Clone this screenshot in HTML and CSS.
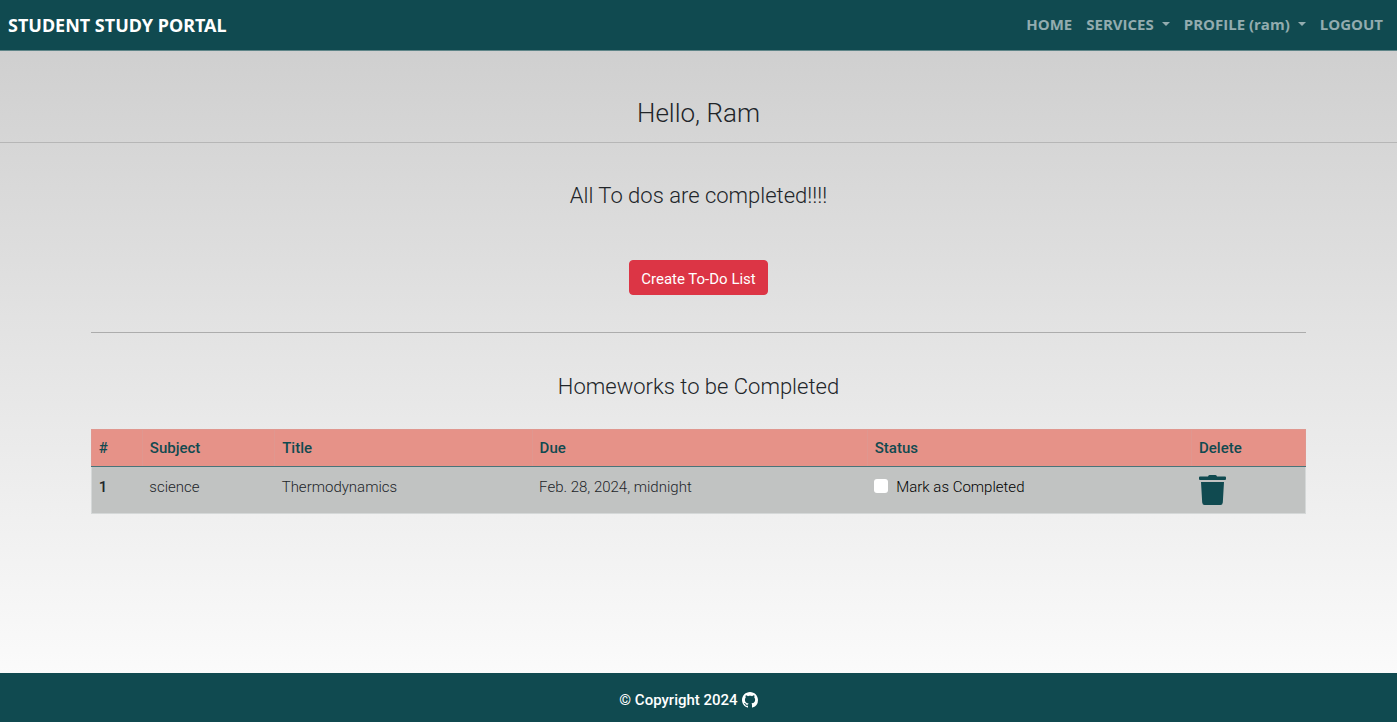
FILE: index.html
```html
<!DOCTYPE html>
<html lang="en">
<head>
<meta charset="utf-8">
<meta name="viewport" content="width=device-width, initial-scale=1">
<title>Student Study Portal</title>
<link rel="stylesheet" href="styles.css">
</head>
<body>
<header class="navbar">
  <a class="brand" href="#">STUDENT STUDY PORTAL</a>
  <nav class="nav-links">
    <a href="#">HOME</a>
    <a class="dropdown" href="#">SERVICES</a>
    <a class="dropdown" href="#">PROFILE (ram)</a>
    <a href="#">LOGOUT</a>
  </nav>
</header>
<main>
  <h1 class="greeting">Hello, Ram</h1>
  <div class="container">
    <section class="todos">
      <h2>All To dos are completed!!!!</h2>
      <button class="btn" type="button">Create To-Do List</button>
    </section>
    <section class="homeworks">
      <h2>Homeworks to be Completed</h2>
      <table class="table">
        <colgroup>
          <col class="col-num"><col class="col-subject"><col class="col-title"><col class="col-due"><col class="col-status"><col>
        </colgroup>
        <thead>
          <tr><th scope="col">#</th><th scope="col">Subject</th><th scope="col">Title</th><th scope="col">Due</th><th scope="col">Status</th><th scope="col">Delete</th></tr>
        </thead>
        <tbody>
          <tr>
            <th scope="row">1</th>
            <td>science</td>
            <td>Thermodynamics</td>
            <td>Feb. 28, 2024, midnight</td>
            <td><label class="check"><input type="checkbox"><span>Mark as Completed</span></label></td>
            <td class="delete-cell">
              <a class="delete" href="#" aria-label="Delete homework">
                <svg viewBox="0 0 27 30" width="27" height="30" aria-hidden="true"><path d="M9 1.500Q9.300 0 10.500 0h6q1.200 0 1.500 1.500h8q1 0 1 1V4q0 1-1 1H1Q0 5 0 4V2.500q0-1 1-1zM2 7h23l-1.200 20.500Q23.500 30 21.500 30h-16q-2 0-2.300-2.500z"/></svg>
              </a>
            </td>
          </tr>
        </tbody>
      </table>
    </section>
  </div>
</main>
<footer class="footer">
  <span>© Copyright 2024</span>
  <a href="#" aria-label="GitHub">
    <svg viewBox="0 0 16 16" width="16" height="16" aria-hidden="true"><path d="M8 0C3.580 0 0 3.580 0 8c0 3.540 2.290 6.530 5.470 7.590.4.070.55-.17.55-.38 0-.19-.01-.82-.01-1.490-2.010.37-2.530-.49-2.690-.94-.09-.23-.48-.94-.82-1.130-.28-.15-.68-.52-.01-.53.63-.01 1.080.58 1.230.82.72 1.210 1.870.87 2.330.66.070-.52.28-.87.51-1.070-1.780-.2-3.640-.89-3.640-3.950 0-.87.31-1.590.82-2.150-.08-.2-.36-1.020.08-2.120 0 0 .67-.21 2.200.82.64-.18 1.320-.27 2-.27s1.360.09 2 .27c1.530-1.040 2.200-.82 2.200-.82.44 1.100.16 1.920.08 2.120.51.56.82 1.270.82 2.150 0 3.070-1.870 3.750-3.650 3.950.29.25.54.73.54 1.480 0 1.070-.01 1.930-.01 2.200 0 .21.15.46.55.38A8.010 8.010 0 0 0 16 8c0-4.420-3.580-8-8-8z"/></svg>
  </a>
</footer>
</body>
</html>
```
FILE: styles.css
```css
:root {
  --teal: #104a50;
  --ink: #212529;
}
* { box-sizing: border-box; }
body {
  margin: 0;
  min-height: 100vh;
  display: flex;
  flex-direction: column;
  font: 300 15px/24px Roboto, sans-serif;
  color: var(--ink);
  background: linear-gradient(#cccccc, #fefefe);
}
a { color: inherit; text-decoration: none; }
.navbar {
  display: flex;
  align-items: center;
  justify-content: space-between;
  height: 51px;
  padding: 0 14px 0 8px;
  background: var(--teal);
  border-bottom: 1px solid #5f8588;
  font-family: "Noto Sans", "Open Sans", sans-serif;
  font-weight: 700;
}
.brand { font-size: 18px; color: #fff; }
.nav-links {
  display: flex;
  gap: 14px;
  padding-bottom: 2px;
  font-family: "Open Sans", "Noto Sans", sans-serif;
  font-size: 15px;
  color: #93acaf;
}
.dropdown { display: flex; align-items: center; gap: 8px; }
.dropdown::after {
  content: "";
  border: 4px solid transparent;
  border-top-color: currentColor;
  border-bottom: 0;
}
main { flex: 1; }
h1, h2 { margin: 0; font-weight: 300; text-align: center; }
.greeting {
  padding: 46px 0 13px;
  font-size: 26px;
  line-height: 32px;
  border-bottom: 1px solid #b6b6b6;
}
.container { width: 87%; margin: 0 auto; }
h2 { font-size: 22px; line-height: 28px; }
.todos {
  display: flex;
  flex-direction: column;
  align-items: center;
  gap: 50px;
  padding: 39px 0 37px;
  border-bottom: 1px solid #acacac;
}
.btn {
  height: 35px;
  padding: 2px 11px 0;
  border: 1px solid #dc3545;
  border-radius: 4px;
  background: #dc3545;
  color: #fff;
  font: 400 15px/24px Roboto, sans-serif;
}
.homeworks { padding: 40px 0; }
.table {
  width: 100%;
  margin-top: 28px;
  table-layout: fixed;
  border-collapse: collapse;
  border: 1px solid #d5d8d8;
}
.col-num { width: 4.2%; }
.col-subject { width: 10.9%; }
.col-title { width: 21.2%; }
.col-due { width: 27.6%; }
.col-status { width: 26.7%; }
th, td { padding: 7px; text-align: left; vertical-align: top; }
td, tbody th { height: 47px; padding-top: 8px; }
th { font-weight: 500; }
thead th {
  padding: 6px 7px;
  background: #e69288;
  color: var(--teal);
  border: 1px solid #e0978f;
  border-bottom: 1px solid #497479;
}
tbody tr { background: #c1c3c2; }
.check { display: flex; align-items: flex-start; gap: 8px; color: #000; }
.check input {
  appearance: none;
  width: 14px;
  height: 14px;
  margin: 4px 0 0;
  border-radius: 3px;
  background: #fff;
}
.delete { display: block; }
.delete svg { display: block; fill: var(--teal); }
.footer {
  display: flex;
  justify-content: center;
  align-items: center;
  gap: 4px;
  height: 49px;
  padding: 5px 20px 0 0;
  background: var(--teal);
  color: #fff;
  font-weight: 500;
}
.footer svg { display: block; fill: currentColor; }
```
